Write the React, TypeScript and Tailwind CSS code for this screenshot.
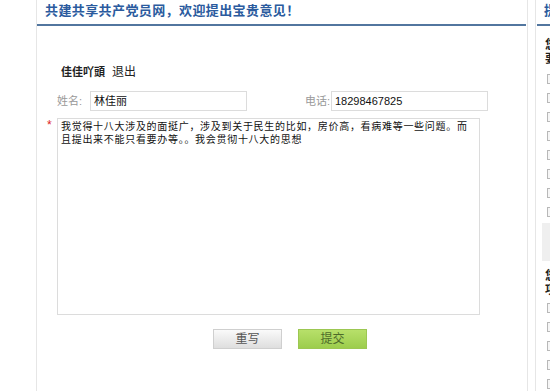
import React from 'react';

const font = "font-['Liberation_Sans','Noto_Sans_CJK_SC',sans-serif]";

function Box() {
  return <div className="w-[9px] h-[10px] border border-[#b8b8b8] bg-[#f6f6f6]" />;
}

export default function App() {
  const boxesA = [0, 1, 2, 3, 4, 5, 6, 7];
  const boxesB = [0, 1, 2, 3, 4];

  return (
    <div className={`w-[550px] h-[391px] bg-white flex overflow-hidden ${font}`}>
      <div className="w-[36px] shrink-0" />

      {/* main panel */}
      <div className="w-[492px] shrink-0 h-full border-l border-r border-[#e6e6e6] flex flex-col">
        <div className="h-[26px] mr-[1px] border-b-2 border-[#52769f] flex items-center pl-[8px] pb-[2px]">
          <span className="text-[13px] font-bold text-[#2b5b9e] tracking-[0.4px]">
            共建共享共产党员网，欢迎提出宝贵意见！
          </span>
        </div>

        <div className="flex items-center gap-[7px] pl-[24px] mt-[39px] h-[14px]">
          <span className="text-[11px] font-bold text-[#222]">佳佳吖頭</span>
          <span className="text-[12px] text-[#222]">退出</span>
        </div>

        <div className="flex items-center mt-[12px] h-[20px]">
          <span className="pl-[20px] w-[53px] text-[11px] text-[#999]">姓名:</span>
          <div className="w-[157px] h-[20px] border border-[#dcdcdc] flex items-center pl-[3px] text-[11px] text-[#111]">
            林佳丽
          </div>
          <span className="ml-[58px] w-[26px] text-[11px] text-[#999]">电话:</span>
          <div className="w-[157px] h-[20px] border border-[#dcdcdc] flex items-center pl-[3px] text-[11px] text-[#111]">
            18298467825
          </div>
        </div>

        <div className="flex mt-[7px]">
          <span className="pl-[10px] w-[20px] text-[12px] leading-[12px] pt-[1px] text-[#d22]">*</span>
          <div className="w-[423px] h-[197px] border border-[#dcdcdc] px-[3px] pt-[2px] text-[10px] leading-[12.5px] tracking-[0.7px] text-[#111]">
            <div className="whitespace-nowrap">我觉得十八大涉及的面挺广，涉及到关于民生的比如，房价高，看病难等一些问题。而</div>
            <div className="whitespace-nowrap">且提出来不能只看要办等。。我会贯彻十八大的思想</div>
          </div>
        </div>

        <div className="flex gap-[16px] pl-[176px] mt-[14px]">
          <button className="w-[69px] h-[20px] border border-[#cfcfcf] bg-gradient-to-b from-[#fafafa] to-[#dedede] text-[12px] text-[#555]">
            重写
          </button>
          <button className="w-[69px] h-[20px] border border-[#9cc752] bg-gradient-to-b from-[#b7e06a] to-[#9ccd4c] text-[12px] text-[#4d6b2a]">
            提交
          </button>
        </div>
      </div>

      <div className="w-[7px] shrink-0" />

      {/* right panel */}
      <div className="flex-1 h-full border-l border-[#e6e6e6] flex flex-col overflow-hidden">
        <div className="h-[26px] ml-[1px] border-b-2 border-[#52769f] flex items-center pl-[7px] pb-[2px]">
          <span className="text-[13px] font-bold text-[#2b5b9e] whitespace-nowrap">提出</span>
        </div>
        <div className="pl-[9px] mt-[12px] text-[12px] font-bold leading-[14px] text-[#222] whitespace-nowrap">
          <div>您</div>
          <div>要</div>
        </div>
        <div className="pl-[11px] mt-[8px] flex flex-col gap-[9px]">
          {boxesA.map((i) => (
            <Box key={i} />
          ))}
        </div>
        <div className="ml-[6px] mt-[6px] h-[38px] bg-[#efefef]" />
        <div className="pl-[9px] mt-[8px] text-[12px] font-bold leading-[14px] text-[#222] whitespace-nowrap">
          <div>您</div>
          <div>项</div>
        </div>
        <div className="pl-[11px] mt-[6px] flex flex-col gap-[9px]">
          {boxesB.map((i) => (
            <Box key={i} />
          ))}
        </div>
      </div>
    </div>
  );
}
